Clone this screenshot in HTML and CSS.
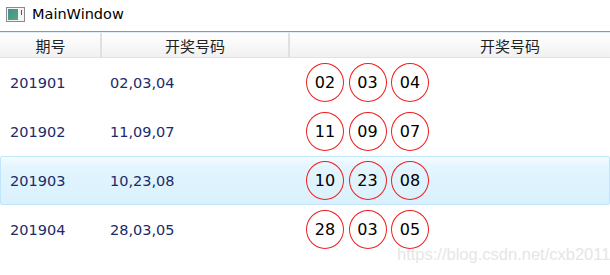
FILE: index.html
```html
<!DOCTYPE html>
<html lang="zh">
<head>
    <meta charset="UTF-8">
    <title>MainWindow</title>
    <link rel="stylesheet" href="styles.css">
</head>
<body>

    <!-- Title bar -->
    <div class="titlebar">
        <svg class="app-icon" width="19" height="15" viewBox="0 0 19 15">
            <defs>
                <linearGradient id="g1" x1="0" y1="0" x2="1" y2="1">
                    <stop offset="0" stop-color="#3f8f9a"/>
                    <stop offset="1" stop-color="#5aa86a"/>
                </linearGradient>
            </defs>
            <rect x="0.5" y="0.5" width="18" height="14" fill="#f4f4f4" stroke="#8a8a8a"/>
            <rect x="2" y="2" width="10" height="11" fill="url(#g1)"/>
            <rect x="15" y="3" width="1" height="5" fill="#555"/>
        </svg>
        <span class="title">MainWindow</span>
    </div>
    <div class="separator"></div>

    <!-- Grid -->
    <div class="grid">
        <div class="grid-header">
            <div class="col col-no">期号</div>
            <div class="col col-nums">开奖号码</div>
            <div class="col col-balls">开奖号码</div>
        </div>
        <div id="rows"></div>
    </div>

    <div class="watermark">https://blog.csdn.net/cxb2011</div>

    <script>
        const data = [
            { no: "201901", nums: ["02", "03", "04"] },
            { no: "201902", nums: ["11", "09", "07"] },
            { no: "201903", nums: ["10", "23", "08"], selected: true },
            { no: "201904", nums: ["28", "03", "05"] }
        ];

        const rows = document.getElementById("rows");
        data.forEach(item => {
            const row = document.createElement("div");
            row.className = "row" + (item.selected ? " selected" : "");
            const balls = item.nums.map(n => `<span class="ball">${n}</span>`).join("");
            row.innerHTML =
                `<div class="cell cell-no">${item.no}</div>` +
                `<div class="cell cell-nums">${item.nums.join(",")}</div>` +
                `<div class="cell cell-balls">${balls}</div>`;
            rows.appendChild(row);
        });
    </script>

</body>
</html>
```

FILE: styles.css
```css
body {
    margin: 0;
    background-color: #fff;
    font-family: "DejaVu Sans", Verdana, sans-serif;
    width: 610px;
    height: 275px;
    overflow: hidden;
    position: relative;
}
.titlebar {
    height: 31px;
    display: flex;
    align-items: center;
    padding-left: 6px;
    box-sizing: border-box;
}
.app-icon {
    display: block;
    margin-top: -3px;
}
.title {
    margin-left: 7px;
    margin-top: -4px;
    font-size: 14.5px;
    color: #000;
}
.separator {
    height: 1px;
    background-color: #6c9fd2;
    border-bottom: 1px solid #e4ecf5;
}
.grid {
    overflow: hidden;
}
.grid-header {
    display: flex;
    height: 24px;
    background: linear-gradient(#ffffff, #f1f1f1);
    border-bottom: 1px solid #e2e2e2;
    font-family: "Noto Sans CJK SC", sans-serif;
    font-size: 15px;
    color: #222;
}
.col {
    display: flex;
    align-items: center;
    justify-content: center;
    flex-shrink: 0;
    box-sizing: border-box;
    border-right: 2px solid #e0e0e0;
}
.col-no {
    width: 102px;
    padding-left: 1px;
}
.col-nums {
    width: 188px;
}
.col-balls {
    width: 440px;
    border-right: none;
}
.row {
    display: flex;
    align-items: center;
    height: 49px;
    box-sizing: border-box;
    border: 1px solid transparent;
    border-radius: 2px;
    color: #1b2a6b;
    font-size: 14.5px;
}
.row.selected {
    background: linear-gradient(#f6fcff 0%, #e3f5fe 20%, #d9f1fd 100%);
    border-color: #bfe6fa;
}
.cell-no {
    width: 100px;
    padding-left: 9px;
    box-sizing: border-box;
}
.cell-nums {
    width: 188px;
    padding-left: 9px;
    box-sizing: border-box;
}
.cell-balls {
    display: flex;
    gap: 4.5px;
    padding-left: 17px;
}
.ball {
    width: 38px;
    height: 39px;
    box-sizing: border-box;
    border: 1.5px solid #f02020;
    border-radius: 50%;
    display: flex;
    align-items: center;
    justify-content: center;
    color: #000;
    font-size: 16px;
}
.watermark {
    position: absolute;
    left: 397px;
    top: 245px;
    font-family: "Liberation Sans", Arial, sans-serif;
    font-size: 16.5px;
    color: #e6e6e6;
}
```
